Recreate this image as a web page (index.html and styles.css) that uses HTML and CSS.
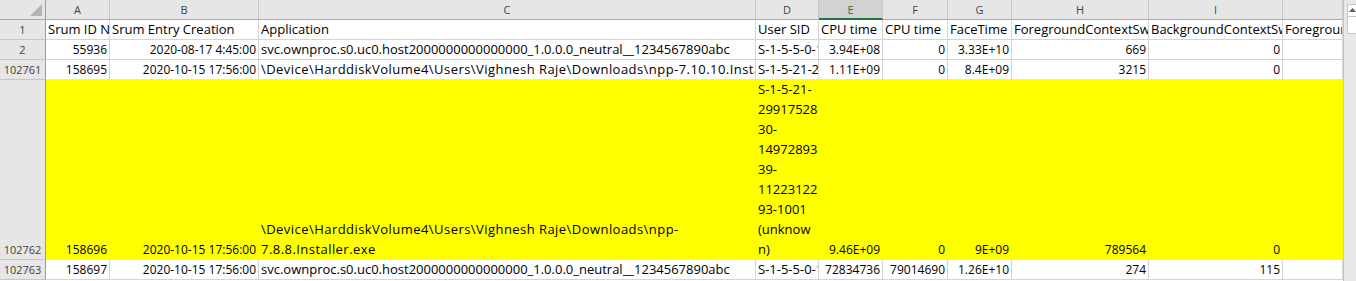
FILE: index.html
```html
<!DOCTYPE html>
<html lang="en">
<head>
    <meta charset="UTF-8">
    <title>SRUM export - sheet</title>
    <link rel="stylesheet" href="styles.css">
</head>
<body>

<div class="screen">
    <div class="sheet">

        <div class="row head">
            <div class="corner">
                <svg width="12" height="12" viewBox="0 0 12 12"><polygon points="12,0 12,12 0,12" fill="#b4b4b4"/></svg>
            </div>
            <div class="colhead">A</div>
            <div class="colhead">B</div>
            <div class="colhead">C</div>
            <div class="colhead">D</div>
            <div class="colhead active">E</div>
            <div class="colhead">F</div>
            <div class="colhead">G</div>
            <div class="colhead">H</div>
            <div class="colhead">I</div>
            <div class="colhead"></div>
        </div>

        <div class="row">
            <div class="rownum">1</div>
            <div class="cell">Srum ID Number</div>
            <div class="cell">Srum Entry Creation</div>
            <div class="cell">Application</div>
            <div class="cell">User SID</div>
            <div class="cell">CPU time</div>
            <div class="cell">CPU time</div>
            <div class="cell">FaceTime</div>
            <div class="cell">ForegroundContextSwitches</div>
            <div class="cell">BackgroundContextSwitches</div>
            <div class="cell">ForegroundCycleTime</div>
        </div>

        <div class="row">
            <div class="rownum">2</div>
            <div class="cell num">55936</div>
            <div class="cell num">2020-08-17 4:45:00</div>
            <div class="cell">svc.ownproc.s0.uc0.host2000000000000000_1.0.0.0_neutral__1234567890abc</div>
            <div class="cell">S-1-5-5-0-1234567</div>
            <div class="cell num">3.94E+08</div>
            <div class="cell num">0</div>
            <div class="cell num">3.33E+10</div>
            <div class="cell num">669</div>
            <div class="cell num">0</div>
            <div class="cell"></div>
        </div>

        <div class="row before-fill">
            <div class="rownum">102761</div>
            <div class="cell num">158695</div>
            <div class="cell num">2020-10-15 17:56:00</div>
            <div class="cell path">\Device\HarddiskVolume4\Users\Vighnesh Raje\Downloads\npp-7.10.10.Installer.exe</div>
            <div class="cell">S-1-5-21-2991752830</div>
            <div class="cell num">1.11E+09</div>
            <div class="cell num">0</div>
            <div class="cell num">8.4E+09</div>
            <div class="cell num">3215</div>
            <div class="cell num">0</div>
            <div class="cell"></div>
        </div>

        <div class="row tall filled">
            <div class="rownum">102762</div>
            <div class="cell num">158696</div>
            <div class="cell num">2020-10-15 17:56:00</div>
            <div class="cell wrap path">
                <span>\Device\HarddiskVolume4\Users\Vighnesh Raje\Downloads\npp-</span>
                <span>7.8.8.Installer.exe</span>
            </div>
            <div class="cell wrap">
                <span>S-1-5-21-</span>
                <span>29917528</span>
                <span>30-</span>
                <span>14972893</span>
                <span>39-</span>
                <span>11223122</span>
                <span>93-1001</span>
                <span>(unknow</span>
                <span>n)</span>
            </div>
            <div class="cell num">9.46E+09</div>
            <div class="cell num">0</div>
            <div class="cell num">9E+09</div>
            <div class="cell num">789564</div>
            <div class="cell num">0</div>
            <div class="cell"></div>
        </div>

        <div class="row">
            <div class="rownum">102763</div>
            <div class="cell num">158697</div>
            <div class="cell num">2020-10-15 17:56:00</div>
            <div class="cell">svc.ownproc.s0.uc0.host2000000000000000_1.0.0.0_neutral__1234567890abc</div>
            <div class="cell">S-1-5-5-0-1234567</div>
            <div class="cell num">72834736</div>
            <div class="cell num">79014690</div>
            <div class="cell num">1.26E+10</div>
            <div class="cell num">274</div>
            <div class="cell num">115</div>
            <div class="cell"></div>
        </div>

    </div>

    <div class="vscroll">
        <div class="sbtn">
            <svg width="7" height="5" viewBox="0 0 7 5"><polygon points="3.5,0 7,4 0,4" fill="#606060"/></svg>
        </div>
        <div class="sthumb"></div>
    </div>
</div>

</body>
</html>
```

FILE: styles.css
```css
body {
    margin: 0;
    padding: 0;
    background: #fff;
    color: #000;
    font-family: 'Open Sans', 'Lato', sans-serif;
    font-size: 13px;
}

.screen {
    display: flex;
    width: 1356px;
    height: 281px;
    overflow: hidden;
}

.sheet {
    width: 1343px;
    flex: none;
}

.row {
    display: grid;
    grid-template-columns: 46px 64px 149px 497px 63px 64px 65px 64px 137px 134px 60px;
    height: 20px;
}

.row.tall {
    height: 180px;
}

/* header row */
.corner, .colhead, .rownum {
    background: #e6e6e6;
    color: #444;
    font-size: 11px;
}

.corner {
    display: flex;
    justify-content: flex-end;
    align-items: flex-end;
    padding: 0 3px 3px 0;
    border-right: 1px solid #9b9b9b;
    border-bottom: 1px solid #ababab;
}

.colhead {
    display: flex;
    justify-content: center;
    align-items: center;
    border-right: 1px solid #c6c6c6;
    border-bottom: 1px solid #ababab;
}

.colhead.active {
    background: #d2d2d2;
    color: #217346;
    border-bottom: 2px solid #217346;
}

.rownum {
    display: flex;
    justify-content: center;
    align-items: flex-end;
    line-height: 19px;
    border-right: 1px solid #9b9b9b;
    border-bottom: 1px solid #c6c6c6;
}

/* data cells */
.cell {
    display: flex;
    align-items: flex-end;
    padding: 0 2px;
    line-height: 19px;
    white-space: nowrap;
    overflow: hidden;
    border-right: 1px solid #d4d4d4;
    border-bottom: 1px solid #d4d4d4;
}

.cell.num {
    justify-content: flex-end;
    font-size: 12px;
}

.cell.path {
    letter-spacing: 0.45px;
}

.cell.wrap {
    flex-direction: column;
    align-items: flex-start;
    justify-content: flex-end;
    line-height: 20px;
}

.before-fill .cell {
    border-bottom-color: #ffff00;
}

.filled .cell {
    background: #ffff00;
    border-color: #ffff00;
}

/* scrollbar stub on the right */
.vscroll {
    flex: 1;
    background: #e8e8e8;
    border-left: 1px solid #c6c6c6;
    display: flex;
    flex-direction: column;
    align-items: flex-end;
    padding-top: 4px;
}

.sbtn {
    width: 9px;
    height: 13px;
    background: #fff;
    border: 1px solid #c6c6c6;
    border-right: none;
    display: flex;
    justify-content: center;
    padding-top: 3px;
    box-sizing: border-box;
}

.sthumb {
    width: 9px;
    height: 17px;
    background: #fff;
    border: 1px solid #c6c6c6;
    border-right: none;
    border-top: none;
    box-sizing: border-box;
}
```
